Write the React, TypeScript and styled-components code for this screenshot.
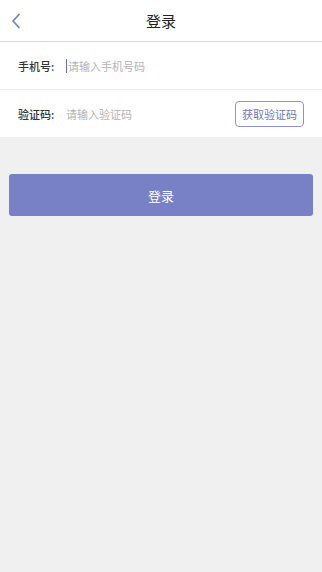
import React from "react"
import styled, { createGlobalStyle } from "styled-components"

const GlobalStyle = createGlobalStyle`
    html, body {
        margin: 0;
        padding: 0;
        background: #f0f0f0;
        font-family: "Noto Sans CJK SC", "Noto Sans", sans-serif;
    }
`

const Page = styled.div`
    position: relative;
    width: 322px;
    min-height: 572px;
    background: #f0f0f0;
`

const TopShade = styled.div`
    position: absolute;
    top: 0;
    left: 160px;
    right: 0;
    height: 2px;
    background: linear-gradient(90deg, #e8e8e8 0%, #9a9a9a 15%, #9a9a9a 100%);
    opacity: 0.7;
`

const Header = styled.div`
    height: 41px;
    background: #fff;
    border-bottom: 1px solid #d6d6d6;
    display: flex;
    align-items: center;
    justify-content: center;
    position: relative;
`

const BackButton = styled.button`
    position: absolute;
    left: 4px;
    top: 8px;
    width: 24px;
    height: 26px;
    padding: 0;
    border: none;
    background: none;
    display: flex;
    align-items: center;
    justify-content: center;
`

const Title = styled.h1`
    margin: 0;
    font-size: 15px;
    font-weight: 400;
    color: #222;
`

const Form = styled.div`
    background: #fff;
`

const Row = styled.div<{ $last?: boolean }>`
    height: 47px;
    display: flex;
    align-items: center;
    padding: 0 18px;
    border-bottom: ${(p) => (p.$last ? "none" : "1px solid #ececec")};
`

const Label = styled.span`
    width: 48px;
    font-size: 11px;
    font-weight: 500;
    color: #333;
`

const Input = styled.input`
    flex: 1;
    min-width: 0;
    border: none;
    outline: none;
    padding: 0;
    font-family: inherit;
    font-size: 11px;
    color: #333;
    background: transparent;
    caret-color: #7880c6;

    &::placeholder {
        color: #b4b4b4;
    }
`

const Caret = styled.span`
    display: inline-block;
    width: 1px;
    height: 14px;
    background: #6a72c0;
    margin-right: 1px;
`

const CodeButton = styled.button`
    height: 26px;
    padding: 0 6px;
    margin-right: 0;
    border: 1px solid #8d93cf;
    border-radius: 4px;
    background: #fff;
    color: #6e76bf;
    font-family: inherit;
    font-size: 11px;
    white-space: nowrap;
`

const Actions = styled.div`
    padding: 37px 9px 0;
`

const SubmitButton = styled.button`
    width: 100%;
    height: 42px;
    border: none;
    border-radius: 3px;
    background: #7880c6;
    color: #fff;
    font-family: inherit;
    font-size: 13px;
`

export default function App() {
    return (
        <>
            <GlobalStyle />
            <Page>
                <TopShade />
                <Header>
                    <BackButton aria-label="返回">
                        <svg width="10" height="16" viewBox="0 0 10 16" fill="none">
                            <path
                                d="M8 1.5L2 8l6 6.5"
                                stroke="#7880c6"
                                strokeWidth="1.8"
                                strokeLinecap="round"
                                strokeLinejoin="round"
                            />
                        </svg>
                    </BackButton>
                    <Title>登录</Title>
                </Header>
                <Form>
                    <Row>
                        <Label>手机号:</Label>
                        <Caret />
                        <Input placeholder="请输入手机号码" />
                    </Row>
                    <Row $last>
                        <Label>验证码:</Label>
                        <Input placeholder="请输入验证码" />
                        <CodeButton>获取验证码</CodeButton>
                    </Row>
                </Form>
                <Actions>
                    <SubmitButton>登录</SubmitButton>
                </Actions>
            </Page>
        </>
    )
}
